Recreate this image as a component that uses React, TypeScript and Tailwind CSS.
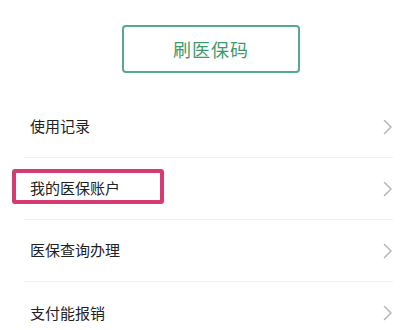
const items = ["使用记录", "我的医保账户", "医保查询办理", "支付能报销"];

function Chevron() {
  return (
    <svg width="10" height="16" viewBox="0 0 10 16" fill="none" className="shrink-0">
      <polyline points="1.5,1.5 8,8 1.5,14.5" stroke="#b8b8b8" strokeWidth="1.6" strokeLinecap="round" strokeLinejoin="round" />
    </svg>
  );
}

export default function App() {
  return (
    <div
      className="w-[401px] h-[330px] overflow-hidden bg-white"
      style={{ fontFamily: '"Noto Sans CJK SC", "Noto Sans", sans-serif' }}
    >
      {/* scan button */}
      <div className="flex pt-[25px] pl-[122px]">
        <button className="w-[178px] h-[48px] rounded-[4px] border-2 border-[#56a98a] bg-white text-[18px] text-[#3d9a6c] tracking-[1px]">
          刷医保码
        </button>
      </div>

      {/* menu list */}
      <div className="mt-[23px] pl-[24px] pr-[8px]">
        {items.map((label, i) => (
          <div
            key={label}
            className={
              "relative flex items-center justify-between h-[62px] pl-[6px] " +
              (i < items.length - 1 ? "border-b border-[#f0f0f0]" : "")
            }
          >
            <span className="text-[15px] text-[#222222]">{label}</span>
            <Chevron />
            {i === 1 && (
              <div className="absolute left-[-12px] top-[11px] w-[152px] h-[35px] rounded-[3px] border-[4px] border-[#d63a72]" />
            )}
          </div>
        ))}
      </div>
    </div>
  );
}
